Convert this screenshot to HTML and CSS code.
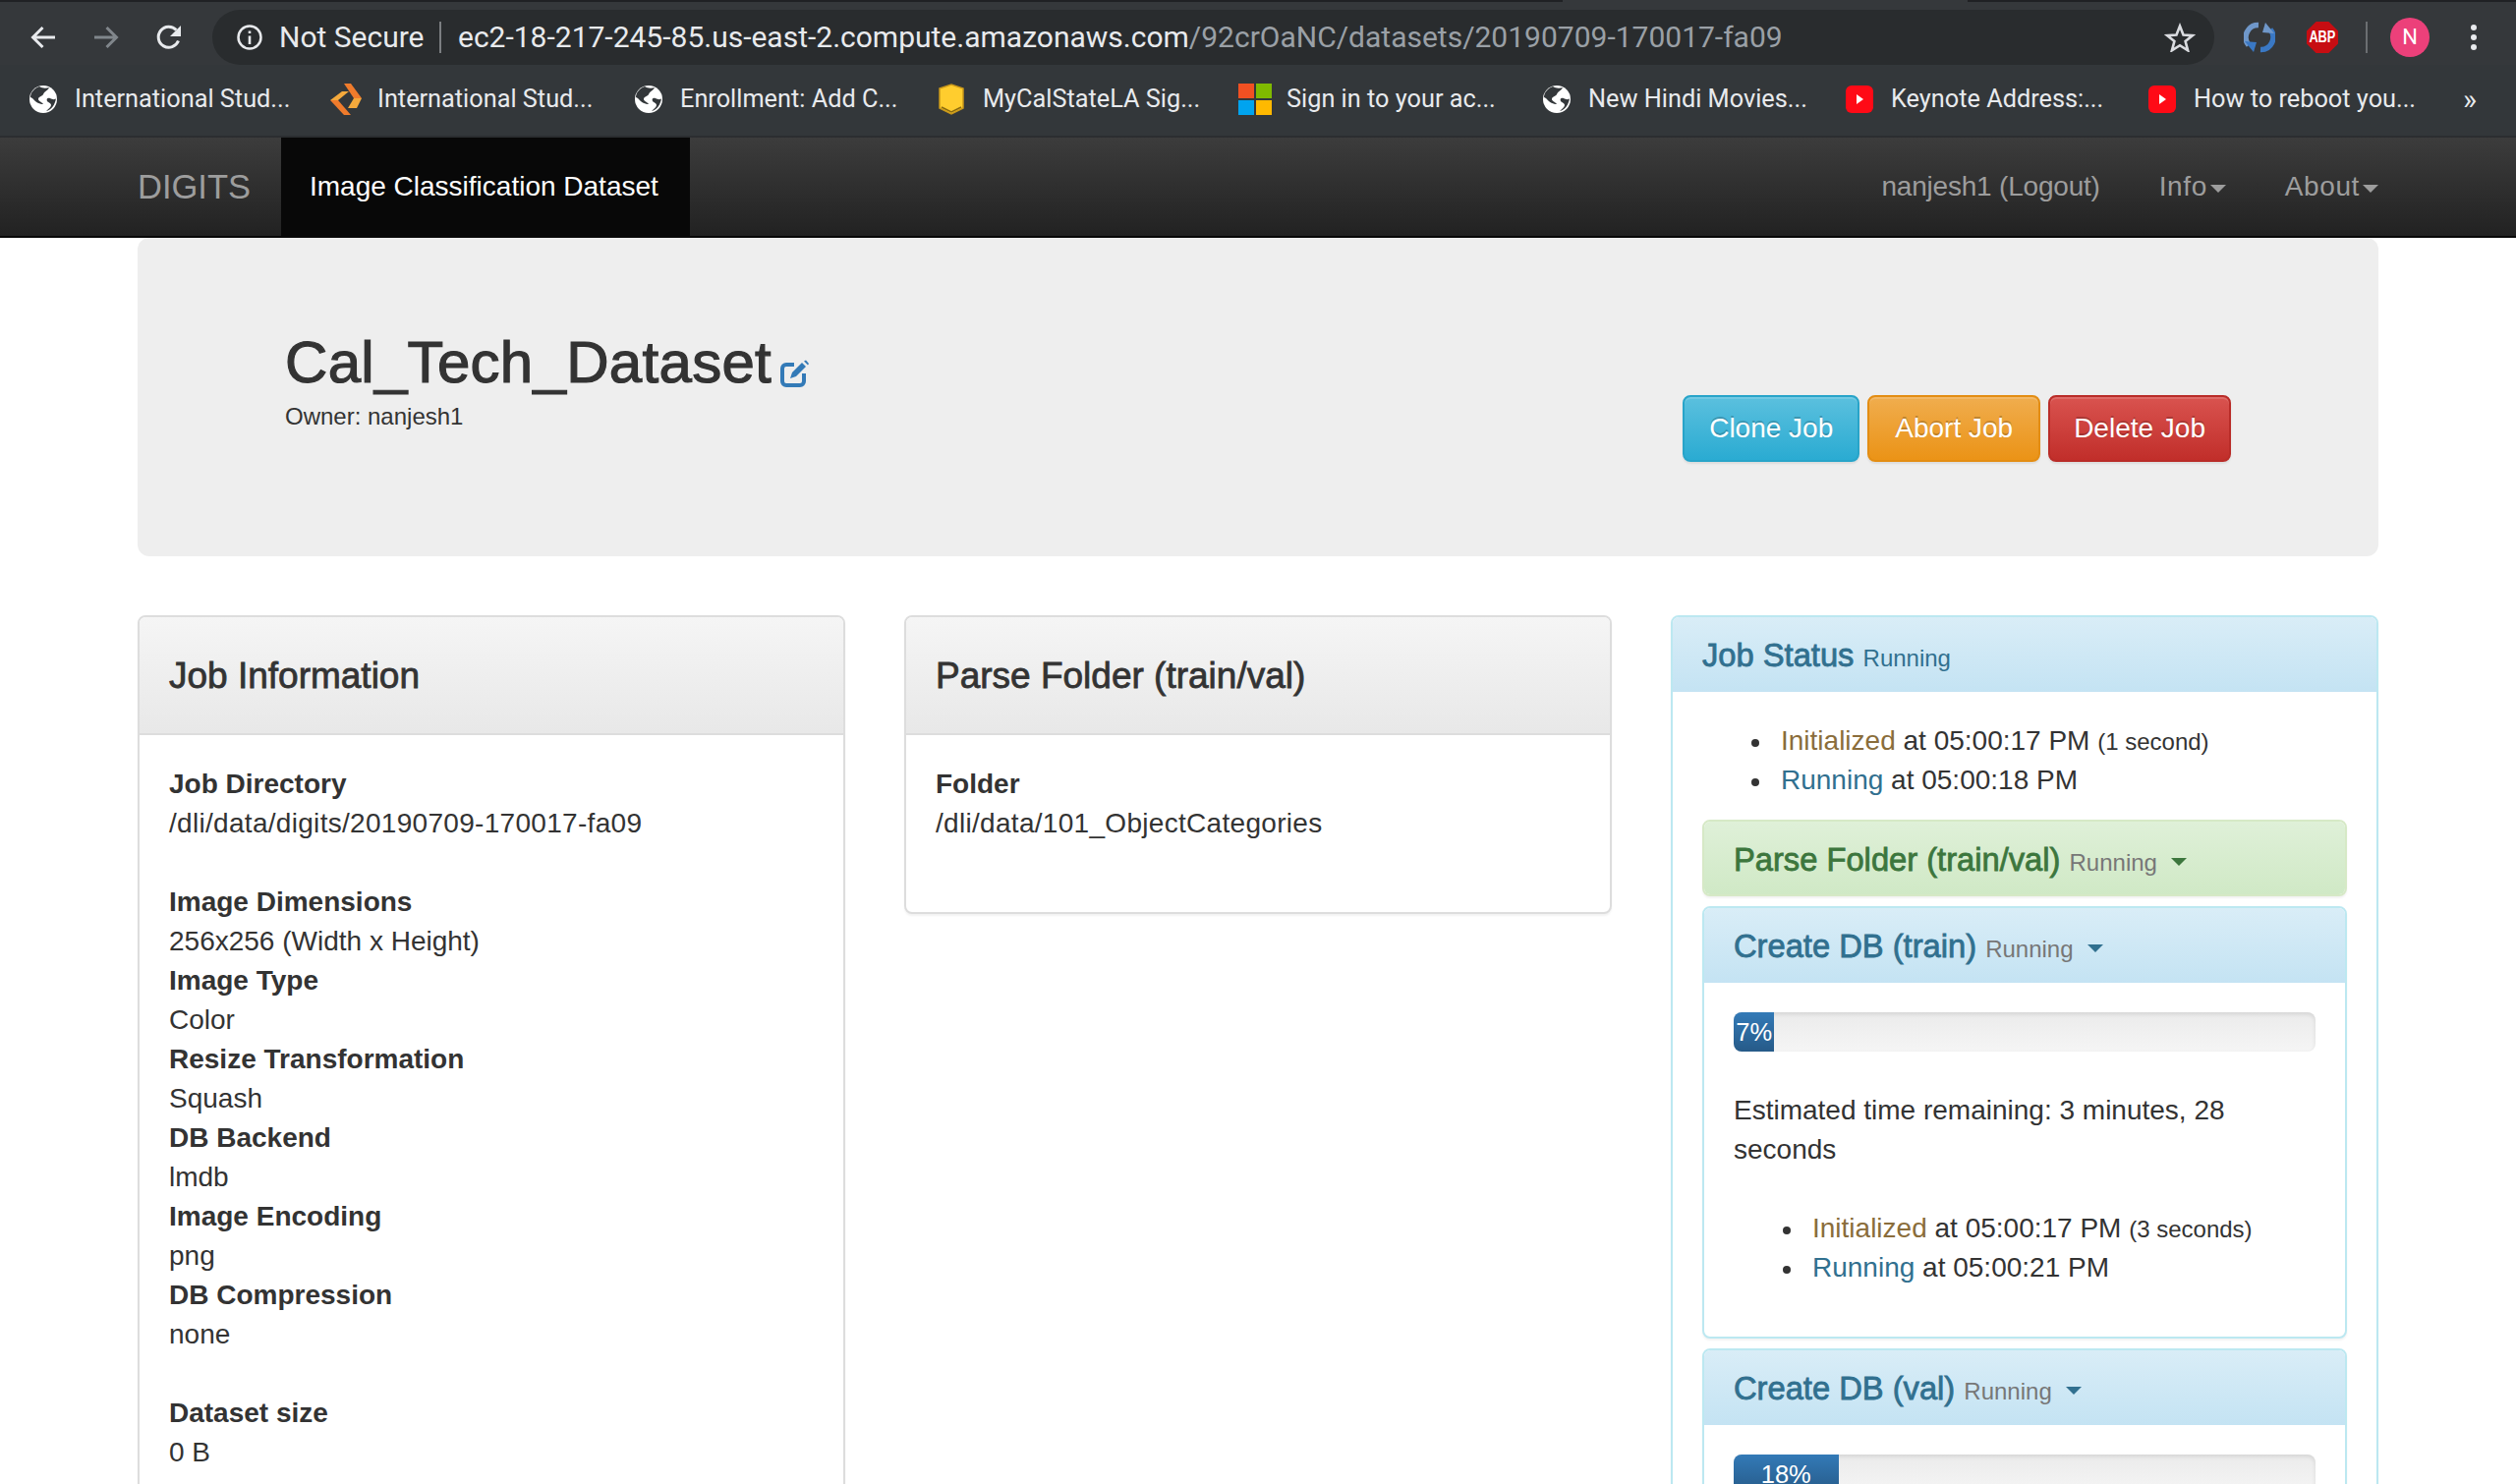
FILE: index.html
```html
<!DOCTYPE html>
<html lang="en">
<head>
    <meta charset="UTF-8">
    <title>Cal_Tech_Dataset - DIGITS</title>
    <link rel="stylesheet" href="styles.css">
</head>
<body>
    <div class="tab-strip"><div class="tab-piece"></div></div>

    <div class="toolbar">
        <svg class="tool-btn" width="28" height="28" viewBox="0 0 28 28"><path d="M26 14H4M13.5 4 3.5 14l10 10" fill="none" stroke="#e8eaed" stroke-width="3"/></svg>
        <svg class="tool-btn" width="28" height="28" viewBox="0 0 28 28"><path d="M2 14h22M14.500 4l10 10-10 10" fill="none" stroke="#80868b" stroke-width="3"/></svg>
        <svg class="tool-btn" width="28" height="28" viewBox="0 0 28 28"><path d="M23.500 17.500A10.500 10.500 0 1 1 21.400 6.600" fill="none" stroke="#e8eaed" stroke-width="3"/><path d="M26 2v11H15z" fill="#e8eaed"/></svg>
        <div class="omnibox">
            <svg class="info-icon" width="28" height="28" viewBox="0 0 28 28"><circle cx="14" cy="14" r="11.500" fill="none" stroke="#e8eaed" stroke-width="2.500"/><path d="M12.700 12.500h2.600V21h-2.600zM12.700 7.500h2.600v2.600h-2.600z" fill="#e8eaed"/></svg>
            <span class="not-secure">Not Secure</span>
            <span class="omni-divider"></span>
            <span class="url">ec2-18-217-245-85.us-east-2.compute.amazonaws.com<span class="url-path">/92crOaNC/datasets/20190709-170017-fa09</span></span>
            <svg class="star" width="32" height="30" viewBox="0 0 32 30"><path d="M16 3.500 19.500 12.500l9.500.6-7.400 6 2.500 9.200L16 23.200l-8.100 5.100 2.500-9.200-7.400-6 9.500-.6z" fill="none" stroke="#dadce0" stroke-width="2.600"/></svg>
        </div>
        <svg class="ext-sync" width="32" height="32" viewBox="0 0 32 32"><path d="M15 3.500A12.500 12.500 0 0 0 5 24" fill="none" stroke="#6f97c9" stroke-width="5.500"/><path d="M1 20l12 1L10 31z" fill="#3a78c4"/><path d="M17 28.500A12.500 12.500 0 0 0 27 8" fill="none" stroke="#3a78c4" stroke-width="5.500"/><path d="M31 12l-12-1L22 1z" fill="#6f97c9"/></svg>
        <div class="ext-abp"><span>ABP</span></div>
        <span class="ext-divider"></span>
        <div class="avatar">N</div>
        <div class="menu-dots"><i></i><i></i><i></i></div>
    </div>

    <div class="bookmarks">
        <div class="bookmark">
            <svg class="bm-icon" width="28" height="28" viewBox="0 0 28 28"><use href="#globe"/></svg>
            <span>International Stud...</span>
        </div>
        <div class="bookmark">
            <svg width="32" height="32" viewBox="0 0 32 32"><path d="M14 0h7l11 15h-8z" fill="#ef7b2c"/><path d="M24 15h8l-5 10h-9z" fill="#f4a93c"/><path d="M12 8h7L8 17H0z" fill="#f4a93c"/><path d="M0 17h8l13 15h-7z" fill="#ef7b2c"/></svg>
            <span>International Stud...</span>
        </div>
        <div class="bookmark">
            <svg class="bm-icon" width="28" height="28" viewBox="0 0 28 28"><use href="#globe"/></svg>
            <span>Enrollment: Add C...</span>
        </div>
        <div class="bookmark">
            <svg class="shield" width="26" height="32" viewBox="0 0 26 32"><path d="M1 5 13 1l12 4v20l-12 6-12-6z" fill="#ffcd2e" stroke="#c9981a" stroke-width="1.500"/><path d="M3 24l10 5 10-5" fill="none" stroke="#8a6a10" stroke-width="1.500"/></svg>
            <span>MyCalStateLA Sig...</span>
        </div>
        <div class="bookmark">
            <div class="ms-logo"><i class="ms-red"></i><i class="ms-green"></i><i class="ms-blue"></i><i class="ms-yellow"></i></div>
            <span>Sign in to your ac...</span>
        </div>
        <div class="bookmark">
            <svg class="bm-icon" width="28" height="28" viewBox="0 0 28 28"><use href="#globe"/></svg>
            <span>New Hindi Movies...</span>
        </div>
        <div class="bookmark">
            <svg class="bm-icon" width="28" height="28" viewBox="0 0 28 28"><use href="#yt"/></svg>
            <span>Keynote Address:...</span>
        </div>
        <div class="bookmark">
            <svg class="bm-icon" width="28" height="28" viewBox="0 0 28 28"><use href="#yt"/></svg>
            <span>How to reboot you...</span>
        </div>
        <span class="more">»</span>
    </div>

    <svg class="defs" width="0" height="0">
        <symbol id="globe" viewBox="0 0 28 28">
            <circle cx="14" cy="14" r="14" fill="#fff"/>
            <path d="M10 1c3 2 7 2 10 1-1 3-5 4-6 7-1 2-5 2-5 5 0 2 4 3 5 5-3 0-8-2-10-5-1-1-2-2-3-2 0-5 4-9 9-11z" fill="#33373a"/>
            <path d="M27 13c-1 2-4 1-6 0-3-1-4 1-3 3 1 1 4 2 4 4 0 2-3 4-5 6 5-1 9-6 10-13z" fill="#33373a"/>
        </symbol>
        <symbol id="yt" viewBox="0 0 28 28">
            <rect width="28" height="28" rx="6" fill="#ff0a16"/>
            <path d="M11 9l7 5-7 5z" fill="#fff"/>
        </symbol>
    </svg>

    <nav class="navbar">
        <a class="brand">DIGITS</a>
        <a class="nav-active">Image Classification Dataset</a>
        <div class="nav-right">
            <a class="nav-user">nanjesh1 (Logout)</a>
            <a>Info<span class="nav-caret"></span></a>
            <a>About<span class="nav-caret"></span></a>
        </div>
    </nav>

    <main class="container">
        <section class="jumbotron">
            <div class="job-title">
                <h1>Cal_Tech_Dataset<svg class="edit-icon" width="30" height="28" viewBox="0 0 30 28"><path d="M14 5H6a4 4 0 0 0-4 4v13a4 4 0 0 0 4 4h14a4 4 0 0 0 4-4v-8" fill="none" stroke="#337ab7" stroke-width="4"/><path d="M10 19l2-6L22 3l4 4-10 10z" fill="#337ab7"/><path d="M24 1.500l4 4 1-1.500-3-3.500z" fill="#337ab7"/></svg></h1>
                <p class="owner">Owner: nanjesh1</p>
            </div>
            <div class="job-actions">
                <a class="btn btn-info">Clone Job</a>
                <a class="btn btn-warning">Abort Job</a>
                <a class="btn btn-danger">Delete Job</a>
            </div>
        </section>

        <div class="columns">
            <section class="panel panel-default">
                <div class="panel-heading big-heading"><h3>Job Information</h3></div>
                <div class="panel-body">
                    <dl>
                        <dt>Job Directory</dt>
                        <dd class="path">/dli/data/digits/20190709-170017-fa09</dd>
                    </dl>
                    <dl>
                        <dt>Image Dimensions</dt>
                        <dd>256x256 (Width x Height)</dd>
                        <dt>Image Type</dt>
                        <dd>Color</dd>
                        <dt>Resize Transformation</dt>
                        <dd>Squash</dd>
                        <dt>DB Backend</dt>
                        <dd>lmdb</dd>
                        <dt>Image Encoding</dt>
                        <dd>png</dd>
                        <dt>DB Compression</dt>
                        <dd>none</dd>
                    </dl>
                    <dl>
                        <dt>Dataset size</dt>
                        <dd>0 B</dd>
                    </dl>
                </div>
            </section>

            <section class="panel panel-default">
                <div class="panel-heading big-heading"><h3>Parse Folder (train/val)</h3></div>
                <div class="panel-body">
                    <dl>
                        <dt>Folder</dt>
                        <dd class="path">/dli/data/101_ObjectCategories</dd>
                    </dl>
                </div>
            </section>

            <section class="panel panel-info">
                <div class="panel-heading"><h3>Job Status <small class="status-main">Running</small></h3></div>
                <div class="panel-body">
                    <ul class="status-list">
                        <li><span class="st-init">Initialized</span> at 05:00:17 PM <small>(1 second)</small></li>
                        <li><span class="st-run">Running</span> at 05:00:18 PM</li>
                    </ul>

                    <div class="panel panel-success task">
                        <div class="panel-heading"><h3>Parse Folder (train/val) <small>Running</small><span class="task-caret"></span></h3></div>
                    </div>

                    <div class="panel panel-info task">
                        <div class="panel-heading"><h3>Create DB (train) <small>Running</small><span class="task-caret"></span></h3></div>
                        <div class="panel-body">
                            <div class="progress"><div class="progress-bar" style="width: 7%">7%</div></div>
                            <p class="eta">Estimated time remaining: 3 minutes, 28 seconds</p>
                            <ul class="status-list">
                                <li><span class="st-init">Initialized</span> at 05:00:17 PM <small>(3 seconds)</small></li>
                                <li><span class="st-run">Running</span> at 05:00:21 PM</li>
                            </ul>
                        </div>
                    </div>

                    <div class="panel panel-info task">
                        <div class="panel-heading"><h3>Create DB (val) <small>Running</small><span class="task-caret"></span></h3></div>
                        <div class="panel-body">
                            <div class="progress"><div class="progress-bar" style="width: 18%">18%</div></div>
                        </div>
                    </div>
                </div>
            </section>
        </div>
    </main>
</body>
</html>
```

FILE: styles.css
```css
html, body {
    height: 1510px;
    overflow: hidden;
}
body {
    margin: 0;
    background-color: #fff;
    color: #333;
    font-family: "Liberation Sans", Arial, sans-serif;
    font-size: 28px;
    line-height: 40px;
}

/* browser chrome */
.tab-strip {
    height: 2px;
    background-color: #202124;
}
.tab-piece {
    width: 412px;
    height: 2px;
    margin-left: 1590px;
    background-color: #35383b;
}
.toolbar {
    display: flex;
    align-items: center;
    height: 64px;
    padding: 8px 0 0;
    box-sizing: border-box;
    background-color: #35383b;
}
.tool-btn {
    flex: none;
    margin-left: 30px;
}
.tool-btn + .tool-btn {
    margin-left: 36px;
}
.omnibox {
    display: flex;
    align-items: center;
    width: 2037px;
    height: 56px;
    margin-left: 30px;
    border-radius: 28px;
    background-color: #292c2e;
    color: #e8eaed;
    font-family: Roboto, "Liberation Sans", sans-serif;
    font-size: 30px;
    line-height: 56px;
    flex: none;
}
.info-icon {
    margin-left: 24px;
    flex: none;
}
.not-secure {
    margin-left: 16px;
    width: 147px;
    white-space: nowrap;
}
.omni-divider {
    width: 2px;
    height: 32px;
    margin: 0 17px 0 16px;
    background-color: #7b7e81;
}
.url {
    white-space: nowrap;
}
.url-path {
    color: #9aa0a6;
}
.star {
    margin-left: auto;
    margin-right: 19px;
}
.ext-sync {
    margin-left: 30px;
    flex: none;
}
.ext-abp {
    width: 32px;
    height: 32px;
    margin-left: 32px;
    background-color: #c70d12;
    clip-path: polygon(30% 0, 70% 0, 100% 30%, 100% 70%, 70% 100%, 30% 100%, 0 70%, 0 30%);
    color: #fff;
    font-size: 16px;
    font-weight: bold;
    line-height: 32px;
    text-align: center;
    flex: none;
}
.ext-abp span {
    display: inline-block;
    transform: scaleX(.8);
    margin: 0 -4px;
}
.ext-divider {
    width: 2px;
    height: 32px;
    margin-left: 28px;
    background-color: #6b6e71;
    flex: none;
}
.avatar {
    width: 40px;
    height: 40px;
    margin-left: 23px;
    border-radius: 50%;
    background-color: #ec407a;
    color: #fff;
    font-family: Roboto, sans-serif;
    font-size: 22px;
    line-height: 40px;
    text-align: center;
    flex: none;
}
.menu-dots {
    display: flex;
    flex-direction: column;
    gap: 4px;
    margin-left: 42px;
}
.menu-dots i {
    display: block;
    width: 6px;
    height: 6px;
    border-radius: 50%;
    background-color: #e8eaed;
}
.bookmarks {
    display: flex;
    align-items: center;
    height: 74px;
    padding: 0 0 2px 28px;
    box-sizing: border-box;
    border-bottom: 2px solid #2b2d30;
    background-color: #33373a;
    color: #e8eaed;
    font-family: Roboto, "Liberation Sans", sans-serif;
    font-size: 25.3px;
}
.bookmark {
    display: flex;
    align-items: center;
    gap: 16px;
    width: 308px;
    white-space: nowrap;
    flex: none;
}
.bookmark svg {
    flex: none;
}
.bookmark .bm-icon {
    margin: 0 2px;
}
.bookmark .shield {
    margin: 0 3px;
}
.ms-logo {
    display: grid;
    grid-template-columns: 16px 16px;
    grid-template-rows: 15px 15px;
    gap: 2px;
    flex: none;
    margin-right: -1px;
}
.ms-red { background-color: #f25022; }
.ms-green { background-color: #7fba00; }
.ms-blue { background-color: #00a4ef; }
.ms-yellow { background-color: #ffb900; }
.more {
    margin-left: 14px;
    font-size: 30px;
}
.defs {
    position: absolute;
}

/* navbar */
.navbar {
    display: flex;
    height: 102px;
    padding-left: 140px;
    box-sizing: border-box;
    border-bottom: 2px solid #080808;
    background-image: linear-gradient(to bottom, #3c3c3c, #222);
    color: #9d9d9d;
    line-height: 100px;
}
.brand {
    width: 146px;
    font-size: 34.5px;
    flex: none;
}
.nav-active {
    padding: 0 30px 0 29px;
    width: 416px;
    box-sizing: border-box;
    background-color: #080808;
    color: #fff;
}
.nav-right {
    display: flex;
    gap: 60px;
    margin-left: auto;
    padding-right: 140px;
    letter-spacing: .6px;
}
.nav-right .nav-user {
    letter-spacing: -.2px;
}
.nav-caret {
    display: inline-block;
    margin-left: 3px;
    vertical-align: middle;
    border-top: 8px solid #9d9d9d;
    border-left: 8px solid transparent;
    border-right: 8px solid transparent;
}

/* page */
.container {
    width: 2280px;
    margin: 0 auto;
}
.jumbotron {
    display: flex;
    justify-content: space-between;
    height: 324px;
    padding: 0 150px;
    box-sizing: border-box;
    border-radius: 12px;
    background-color: #eee;
}
.job-title h1 {
    margin: 94px 0 0;
    font-size: 60px;
    font-weight: 500;
    line-height: 66px;
    letter-spacing: .3px;
    -webkit-text-stroke: 1.2px #333;
}
.edit-icon {
    margin-left: 9px;
    vertical-align: -5px;
}
.owner {
    margin: 5px 0 0;
    font-size: 24px;
    line-height: 34px;
}
.job-actions {
    display: flex;
    gap: 8px;
    margin-top: 160px;
}
.btn {
    height: 68px;
    padding: 0 24px;
    box-sizing: border-box;
    border: 2px solid;
    border-radius: 8px;
    color: #fff;
    line-height: 64px;
    text-shadow: 0 -2px 0 rgba(0, 0, 0, .2);
    box-shadow: inset 0 2px 0 rgba(255, 255, 255, .15), 0 2px 2px rgba(0, 0, 0, .075);
}
.btn-info {
    padding: 0 25px;
    background-image: linear-gradient(to bottom, #5bc0de, #2aabd2);
    border-color: #28a4c9;
}
.btn-warning {
    padding: 0 26px;
    background-image: linear-gradient(to bottom, #f0ad4e, #eb9316);
    border-color: #e38d13;
}
.btn-danger {
    background-image: linear-gradient(to bottom, #d9534f, #c12e2a);
    border-color: #b92c28;
}
.columns {
    display: grid;
    grid-template-columns: repeat(3, 720px);
    gap: 60px;
    align-items: start;
    margin-top: 60px;
}

/* panels */
.panel {
    border: 2px solid;
    border-radius: 8px;
    background-color: #fff;
    box-shadow: 0 2px 2px rgba(0, 0, 0, .05);
}
.panel-default { border-color: #ddd; }
.panel-info { border-color: #bce8f1; }
.panel-success { border-color: #d6e9c6; }
.panel-heading {
    height: 76px;
    padding: 0 30px;
    border-radius: 6px 6px 0 0;
    line-height: 78px;
}
.panel-default > .panel-heading {
    background-image: linear-gradient(to bottom, #f5f5f5, #e8e8e8);
    border-bottom: 2px solid #ddd;
}
.panel-info > .panel-heading {
    background-image: linear-gradient(to bottom, #d9edf7, #c4e3f3);
    color: #31708f;
}
.panel-success > .panel-heading {
    height: 74px;
    border-radius: 6px;
    background-image: linear-gradient(to bottom, #dff0d8, #d0e9c6);
    color: #3c763d;
}
.panel-heading h3 {
    margin: 0;
    font-size: 32.7px;
    font-weight: 500;
    line-height: inherit;
    -webkit-text-stroke: .8px;
}
.panel-heading small {
    color: #777;
    font-size: 24px;
    font-weight: normal;
    -webkit-text-stroke: 0;
}
.panel-heading small.status-main {
    color: #31708f;
}
.big-heading {
    height: 118px;
    line-height: 120px;
}
.big-heading h3 {
    font-size: 37px;
}
.panel-body {
    padding: 30px;
}
.panel-body dl {
    margin: 0 0 40px;
}
.panel-body dt {
    font-weight: bold;
}
.panel-body dd {
    margin: 0;
}
.panel-body .path {
    letter-spacing: .3px;
}
.status-list {
    margin: 0 0 20px;
    padding-left: 80px;
    list-style: none;
}
.status-list li {
    height: 40px;
}
.status-list li::before {
    content: "";
    display: inline-block;
    width: 8px;
    height: 8px;
    margin: 0 22px 0 -30px;
    border-radius: 50%;
    background-color: #333;
    vertical-align: middle;
}
.status-list small {
    font-size: 24px;
    line-height: 1;
}
.st-init { color: #8a6d3b; }
.st-run { color: #31708f; }
.task {
    margin-top: 10px;
}
.status-list + .task {
    margin-top: 0;
}
.task-caret {
    display: inline-block;
    margin-left: 14px;
    vertical-align: middle;
    border-top: 8px solid;
    border-left: 8px solid transparent;
    border-right: 8px solid transparent;
}
.progress {
    height: 40px;
    overflow: hidden;
    margin-bottom: 40px;
    border-radius: 8px;
    background-image: linear-gradient(to bottom, #ebebeb, #f5f5f5);
    box-shadow: inset 0 2px 4px rgba(0, 0, 0, .1);
}
.progress-bar {
    height: 40px;
    background-image: linear-gradient(to bottom, #337ab7, #265a88);
    color: #fff;
    font-size: 25.5px;
    line-height: 40px;
    text-align: center;
}
.eta {
    margin: 0 0 40px;
}
```
